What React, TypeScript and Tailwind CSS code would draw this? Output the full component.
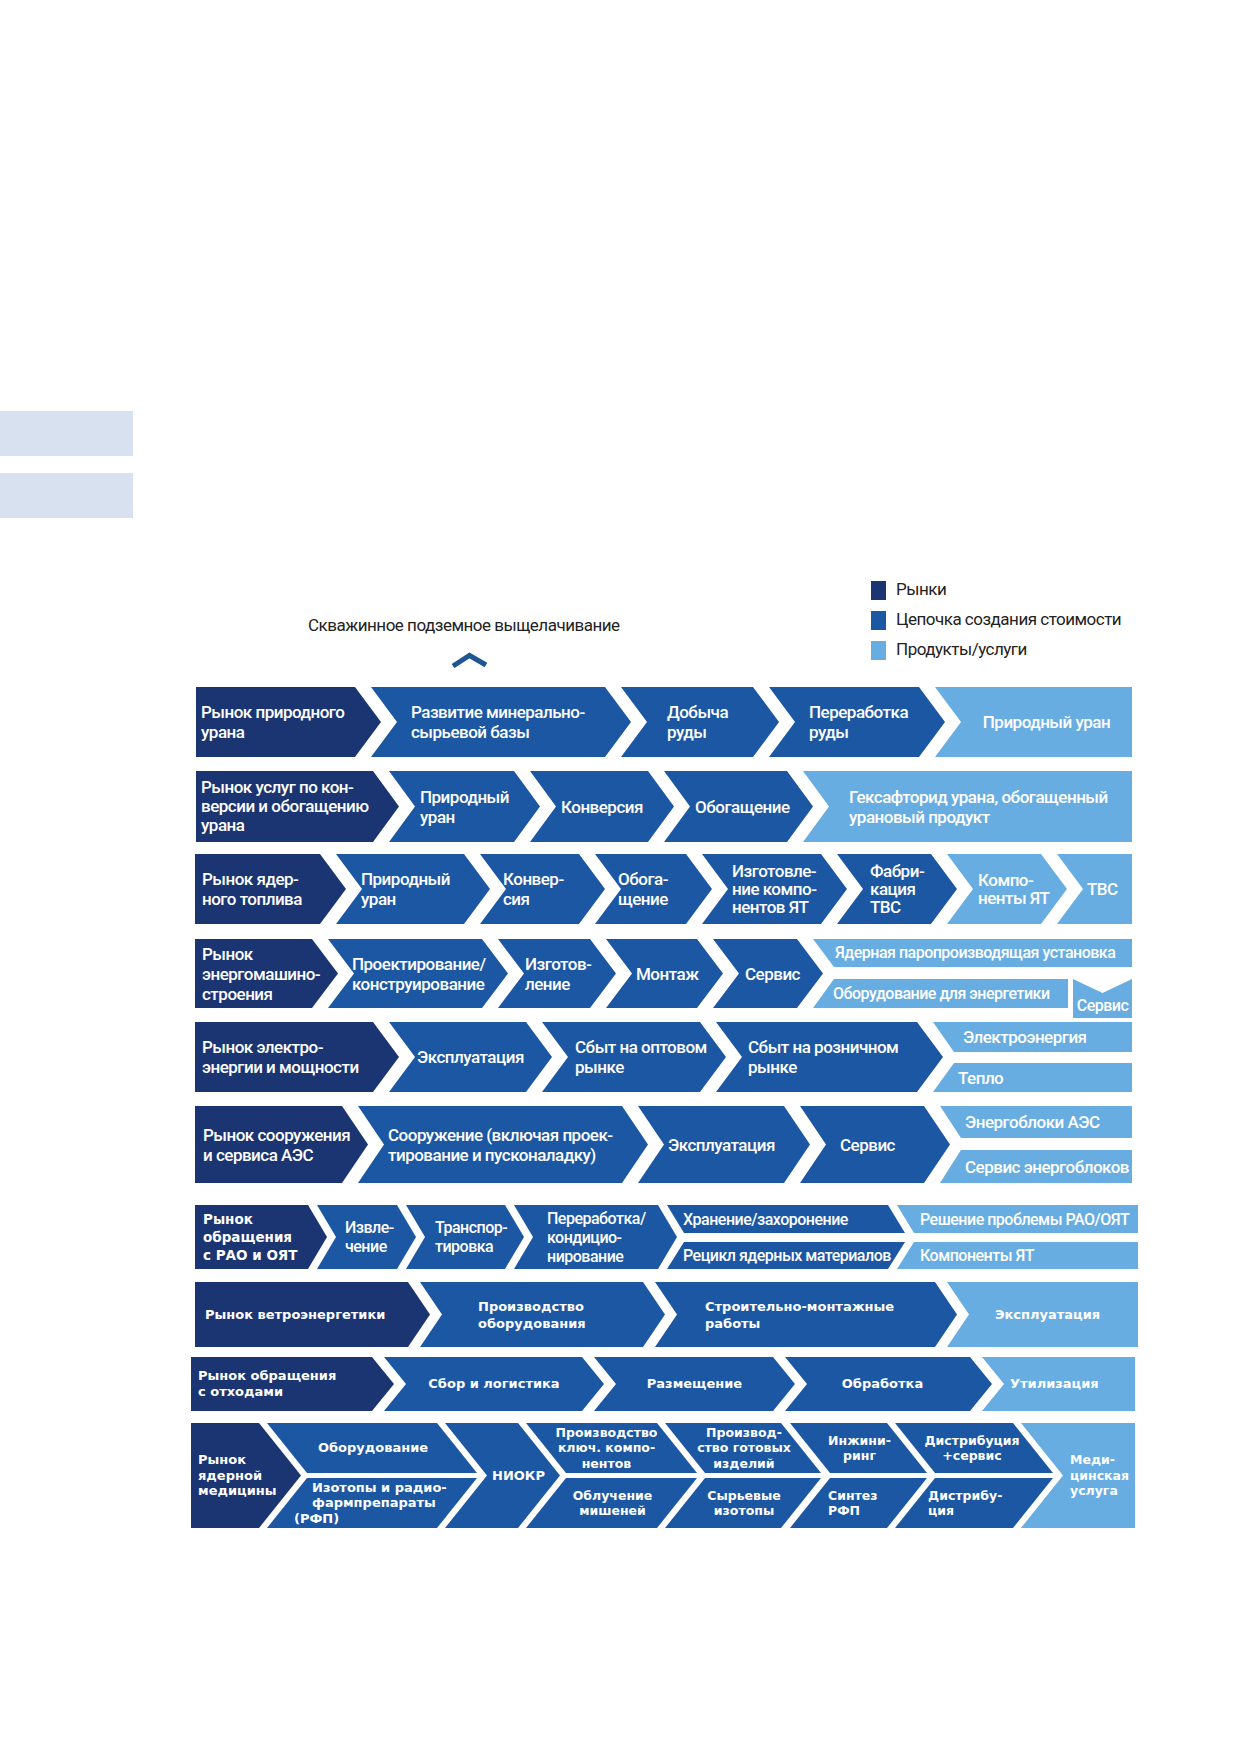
import React from "react";

const DARK = "bg-[#1b3573]";
const MID = "bg-[#1c57a3]";
const LIGHT = "bg-[#67ade2]";

// chevron shapes
const F26 = "[clip-path:polygon(0_0,calc(100%_-_26px)_0,100%_50%,calc(100%_-_26px)_100%,0_100%)]";
const M26 = "[clip-path:polygon(0_0,calc(100%_-_26px)_0,100%_50%,calc(100%_-_26px)_100%,0_100%,26px_50%)]";
const L26 = "[clip-path:polygon(0_0,100%_0,100%_100%,0_100%,26px_50%)]";
const LT21 = "[clip-path:polygon(0_0,100%_0,100%_100%,21px_100%)]";
const LB21 = "[clip-path:polygon(21px_0,100%_0,100%_100%,0_100%)]";

const F19 = "[clip-path:polygon(0_0,calc(100%_-_19px)_0,100%_50%,calc(100%_-_19px)_100%,0_100%)]";
const M19 = "[clip-path:polygon(0_0,calc(100%_-_19px)_0,100%_50%,calc(100%_-_19px)_100%,0_100%,19px_50%)]";
const DT19 = "[clip-path:polygon(0_0,calc(100%_-_19px)_0,calc(100%_-_2px)_100%,17px_100%)]";
const DB19 = "[clip-path:polygon(17px_0,calc(100%_-_2px)_0,calc(100%_-_19px)_100%,0_100%)]";
const LT17 = "[clip-path:polygon(0_0,100%_0,100%_100%,17px_100%)]";
const LB17 = "[clip-path:polygon(17px_0,100%_0,100%_100%,0_100%)]";

const F22 = "[clip-path:polygon(0_0,calc(100%_-_22px)_0,100%_50%,calc(100%_-_22px)_100%,0_100%)]";
const M22 = "[clip-path:polygon(0_0,calc(100%_-_22px)_0,100%_50%,calc(100%_-_22px)_100%,0_100%,22px_50%)]";
const L22 = "[clip-path:polygon(0_0,100%_0,100%_100%,0_100%,22px_50%)]";

const F42 = "[clip-path:polygon(0_0,calc(100%_-_42px)_0,100%_50%,calc(100%_-_42px)_100%,0_100%)]";
const M42 = "[clip-path:polygon(0_0,calc(100%_-_42px)_0,100%_50%,calc(100%_-_42px)_100%,0_100%,42px_50%)]";
const L42 = "[clip-path:polygon(0_0,100%_0,100%_100%,0_100%,42px_50%)]";
const DT42 = "[clip-path:polygon(0_0,calc(100%_-_42px)_0,calc(100%_-_2px)_100%,40px_100%)]";
const DB42 = "[clip-path:polygon(40px_0,calc(100%_-_2px)_0,calc(100%_-_42px)_100%,0_100%)]";

const VSHAPE = "[clip-path:polygon(0_0,50%_14px,100%_0,100%_100%,0_100%)]";

function B({ c, children }: { c: string; children?: React.ReactNode }) {
  return (
    <div className={"flex shrink-0 items-center whitespace-nowrap text-white " + c}>
      <div>{children}</div>
    </div>
  );
}

function Col({ c, children }: { c: string; children?: React.ReactNode }) {
  return <div className={"flex shrink-0 flex-col " + c}>{children}</div>;
}

const legend = [
  { color: DARK, label: "Рынки" },
  { color: MID, label: "Цепочка создания стоимости" },
  { color: LIGHT, label: "Продукты/услуги" },
];

export default function App() {
  return (
    <div className="w-[1240px] h-[1754px] overflow-hidden bg-white [font-family:Roboto,sans-serif]">
      <div className="pt-[411px]">
        <div className="h-[45px] w-[133px] bg-[#d8e1f0]" />
        <div className="mt-[17px] h-[45px] w-[133px] bg-[#d8e1f0]" />
      </div>

      <div className="mt-[57px] flex h-[112px] tracking-[-0.5px]">
        <div className="ml-[308px] w-[563px] pt-[40px]">
          <div className="whitespace-nowrap text-[17px] leading-[20px] text-[#222]">
            Скважинное подземное выщелачивание
          </div>
          <svg className="ml-[143px] mt-[17px] block" width="37" height="16" viewBox="0 0 37 16">
            <path d="M2 14 L18.5 3.5 L35 13" fill="none" stroke="#1f5592" strokeWidth="5" strokeLinejoin="miter" />
          </svg>
        </div>
        <div className="flex flex-col text-[17px] text-[#222]">
          {legend.map((l) => (
            <div key={l.label} className="flex h-[30px] items-center">
              <div className={"h-[19px] w-[15px] " + l.color} />
              <span className="ml-[10px] whitespace-nowrap">{l.label}</span>
            </div>
          ))}
        </div>
      </div>

      {/* rows 1-7 */}
      <div className="font-medium text-[17px] leading-[20px] tracking-[-0.5px]">
        {/* Row 1 */}
        <div className="ml-[196px] flex h-[70px]">
          <B c={"w-[185px] pl-[5px] " + DARK + " " + F26}>Рынок природного<br />урана</B>
          <B c={"ml-[-10px] w-[260px] pl-[40px] " + MID + " " + M26}>Развитие минерально-<br />сырьевой базы</B>
          <B c={"ml-[-10px] w-[158px] pl-[46px] " + MID + " " + M26}>Добыча<br />руды</B>
          <B c={"ml-[-10px] w-[176px] pl-[40px] " + MID + " " + M26}>Переработка<br />руды</B>
          <B c={"ml-[-10px] w-[197px] justify-center pl-[26px] " + LIGHT + " " + L26}>Природный уран</B>
        </div>

        {/* Row 2 */}
        <div className="ml-[196px] mt-[14px] flex h-[71px]">
          <B c={"w-[203px] pl-[5px] leading-[19px] " + DARK + " " + F26}>Рынок услуг по кон-<br />версии и обогащению<br />урана</B>
          <B c={"ml-[-10px] w-[151px] pl-[31px] " + MID + " " + M26}>Природный<br />уран</B>
          <B c={"ml-[-10px] w-[144px] pl-[31px] " + MID + " " + M26}>Конверсия</B>
          <B c={"ml-[-10px] w-[149px] pl-[31px] " + MID + " " + M26}>Обогащение</B>
          <B c={"ml-[-10px] w-[329px] pl-[46px] " + LIGHT + " " + L26}>Гексафторид урана, обогащенный<br />урановый продукт</B>
        </div>

        {/* Row 3 */}
        <div className="ml-[195px] mt-[12px] flex h-[70px]">
          <B c={"w-[151px] pl-[7px] " + DARK + " " + F26}>Рынок ядер-<br />ного топлива</B>
          <B c={"ml-[-10px] w-[154px] pl-[25px] " + MID + " " + M26}>Природный<br />уран</B>
          <B c={"ml-[-10px] w-[125px] pl-[23px] " + MID + " " + M26}>Конвер-<br />сия</B>
          <B c={"ml-[-10px] w-[117px] pl-[23px] " + MID + " " + M26}>Обога-<br />щение</B>
          <B c={"ml-[-10px] w-[145px] pl-[30px] leading-[18px] " + MID + " " + M26}>Изготовле-<br />ние компо-<br />нентов ЯТ</B>
          <B c={"ml-[-10px] w-[120px] pl-[33px] leading-[18px] " + MID + " " + M26}>Фабри-<br />кация<br />ТВС</B>
          <B c={"ml-[-10px] w-[120px] pl-[31px] leading-[18px] " + LIGHT + " " + M26}>Компо-<br />ненты ЯТ</B>
          <B c={"ml-[-10px] w-[75px] pl-[30px] " + LIGHT + " " + L26}>ТВС</B>
        </div>

        {/* Row 4 */}
        <div className="ml-[195px] mt-[15px] flex h-[69px]">
          <B c={"w-[143px] pl-[7px] leading-[20px] " + DARK + " " + F26}>Рынок<br />энергомашино-<br />строения</B>
          <B c={"ml-[-10px] w-[180px] pl-[24px] " + MID + " " + M26}>Проектирование/<br />конструирование</B>
          <B c={"ml-[-10px] w-[118px] pl-[27px] " + MID + " " + M26}>Изготов-<br />ление</B>
          <B c={"ml-[-10px] w-[117px] pl-[30px] " + MID + " " + M26}>Монтаж</B>
          <B c={"ml-[-10px] w-[110px] pl-[32px] " + MID + " " + M26}>Сервис</B>
          <Col c="ml-[-10px] w-[319px] text-[16px]">
            <B c={"h-[28px] pl-[22px] " + LIGHT + " " + LT21}>Ядерная паропроизводящая установка</B>
            <div className="mt-[12px] flex gap-[5px]">
              <B c={"h-[29px] w-[255px] pl-[20px] " + LIGHT + " " + LB21}>Оборудование для энергетики</B>
              <div className={"flex h-[39px] w-[59px] shrink-0 items-end justify-center pb-[3px] text-white leading-[18px] " + LIGHT + " " + VSHAPE}>
                Сервис
              </div>
            </div>
          </Col>
        </div>

        {/* Row 5 */}
        <div className="ml-[195px] mt-[14px] flex h-[70px]">
          <B c={"w-[204px] pl-[7px] " + DARK + " " + F26}>Рынок электро-<br />энергии и мощности</B>
          <B c={"ml-[-10px] w-[163px] pl-[28px] " + MID + " " + M26}>Эксплуатация</B>
          <B c={"ml-[-10px] w-[184px] pl-[33px] " + MID + " " + M26}>Сбыт на оптовом<br />рынке</B>
          <B c={"ml-[-10px] w-[227px] pl-[32px] " + MID + " " + M26}>Сбыт на розничном<br />рынке</B>
          <Col c="ml-[-10px] w-[199px]">
            <B c={"h-[30px] pl-[30px] " + LIGHT + " " + LT21}>Электроэнергия</B>
            <B c={"mt-[11px] h-[29px] pl-[25px] " + LIGHT + " " + LB21}>Тепло</B>
          </Col>
        </div>

        {/* Row 6 */}
        <div className="ml-[195px] mt-[14px] flex h-[77px]">
          <B c={"w-[173px] pl-[8px] " + DARK + " " + F26}>Рынок сооружения<br />и сервиса АЭС</B>
          <B c={"ml-[-10px] w-[290px] pl-[30px] " + MID + " " + M26}>Сооружение (включая проек-<br />тирование и пусконаладку)</B>
          <B c={"ml-[-10px] w-[172px] pl-[30px] " + MID + " " + M26}>Эксплуатация</B>
          <B c={"ml-[-10px] w-[150px] pl-[40px] " + MID + " " + M26}>Сервис</B>
          <Col c="ml-[-10px] w-[192px]">
            <B c={"h-[32px] pl-[25px] " + LIGHT + " " + LT21}>Энергоблоки АЭС</B>
            <B c={"mt-[12px] h-[33px] pl-[25px] " + LIGHT + " " + LB21}>Сервис энергоблоков</B>
          </Col>
        </div>

        {/* Row 7 */}
        <div className="ml-[195px] mt-[22px] flex h-[64px] text-[16px] leading-[19px]">
          <B c={"w-[132px] pl-[8px] [font-family:DejaVu_Sans,sans-serif] font-bold text-[13.5px] leading-[18px] tracking-normal " + DARK + " " + F19}>Рынок<br />обращения<br />с РАО и ОЯТ</B>
          <B c={"ml-[-10px] w-[99px] pl-[28px] " + MID + " " + M19}>Извле-<br />чение</B>
          <B c={"ml-[-10px] w-[118px] pl-[29px] " + MID + " " + M19}>Транспор-<br />тировка</B>
          <B c={"ml-[-10px] w-[163px] pl-[33px] " + MID + " " + M19}>Переработка/<br />кондицио-<br />нирование</B>
          <Col c="ml-[-10px] w-[240px]">
            <B c={"h-[28px] pl-[16px] " + MID + " " + DT19}>Хранение/захоронение</B>
            <B c={"mt-[9px] h-[27px] pl-[16px] " + MID + " " + DB19}>Рецикл ядерных материалов</B>
          </Col>
          <Col c="ml-[-10px] w-[241px]">
            <B c={"h-[28px] pl-[23px] " + LIGHT + " " + LT17}>Решение проблемы РАО/ОЯТ</B>
            <B c={"mt-[9px] h-[27px] pl-[23px] " + LIGHT + " " + LB17}>Компоненты ЯТ</B>
          </Col>
        </div>
      </div>

      {/* rows 8-10 */}
      <div className="[font-family:DejaVu_Sans,sans-serif] font-bold text-[13px] leading-[17px]">
        {/* Row 8 */}
        <div className="ml-[195px] mt-[13px] flex h-[65px]">
          <B c={"w-[235px] pl-[10px] " + DARK + " " + F22}>Рынок ветроэнергетики</B>
          <B c={"ml-[-10px] w-[245px] pl-[58px] " + MID + " " + M22}>Производство<br />оборудования</B>
          <B c={"ml-[-10px] w-[302px] pl-[50px] " + MID + " " + M22}>Строительно-монтажные<br />работы</B>
          <B c={"ml-[-10px] w-[191px] justify-center pl-[10px] " + LIGHT + " " + L22}>Эксплуатация</B>
        </div>

        {/* Row 9 */}
        <div className="ml-[191px] mt-[10px] flex h-[54px] leading-[16px]">
          <B c={"w-[203px] pl-[7px] " + DARK + " " + F22}>Рынок обращения<br />с отходами</B>
          <B c={"ml-[-10px] w-[220px] justify-center px-[22px] " + MID + " " + M22}>Сбор и логистика</B>
          <B c={"ml-[-10px] w-[201px] justify-center px-[22px] " + MID + " " + M22}>Размещение</B>
          <B c={"ml-[-10px] w-[207px] justify-center pl-[16px] pr-[28px] " + MID + " " + M22}>Обработка</B>
          <B c={"ml-[-10px] w-[153px] pl-[28px] " + LIGHT + " " + L22}>Утилизация</B>
        </div>

        {/* Row 10 */}
        <div className="ml-[191px] mt-[12px] flex h-[105px] text-[12.5px] leading-[15.5px]">
          <B c={"w-[110px] pl-[7px] text-[13px] " + DARK + " " + F42}>Рынок<br />ядерной<br />медицины</B>
          <Col c="ml-[-34px] w-[212px] text-[13px]">
            <B c={"h-[50px] justify-center " + MID + " " + DT42}>Оборудование</B>
            <div className={"mt-[5px] flex h-[50px] flex-col justify-center whitespace-nowrap pl-[45px] text-white " + MID + " " + DB42}>
              <div>Изотопы и радио-</div>
              <div>фармпрепараты</div>
              <div className="ml-[-18px]">(РФП)</div>
            </div>
          </Col>
          <B c={"ml-[-34px] w-[115px] justify-center pl-[42px] pr-[10px] text-[13px] " + MID + " " + M42}>НИОКР</B>
          <Col c="ml-[-34px] w-[173px] text-center">
            <B c={"h-[50px] justify-center pr-[12px] " + MID + " " + DT42}>Производство<br />ключ. компо-<br />нентов</B>
            <B c={"mt-[5px] h-[50px] justify-center " + MID + " " + DB42}>Облучение<br />мишеней</B>
          </Col>
          <Col c="ml-[-34px] w-[158px] text-center">
            <B c={"h-[50px] justify-center " + MID + " " + DT42}>Производ-<br />ство готовых<br />изделий</B>
            <B c={"mt-[5px] h-[50px] justify-center " + MID + " " + DB42}>Сырьевые<br />изотопы</B>
          </Col>
          <Col c="ml-[-33px] w-[139px]">
            <B c={"h-[50px] justify-center text-center " + MID + " " + DT42}>Инжини-<br />ринг</B>
            <B c={"mt-[5px] h-[50px] pl-[38px] " + MID + " " + DB42}>Синтез<br />РФП</B>
          </Col>
          <Col c="ml-[-34px] w-[160px]">
            <B c={"h-[50px] justify-center pr-[6px] text-center " + MID + " " + DT42}>Дистрибуция<br />+сервис</B>
            <B c={"mt-[5px] h-[50px] pl-[33px] " + MID + " " + DB42}>Дистрибу-<br />ция</B>
          </Col>
          <B c={"ml-[-34px] w-[114px] pl-[49px] " + LIGHT + " " + L42}>Меди-<br />цинская<br />услуга</B>
        </div>
      </div>
    </div>
  );
}
